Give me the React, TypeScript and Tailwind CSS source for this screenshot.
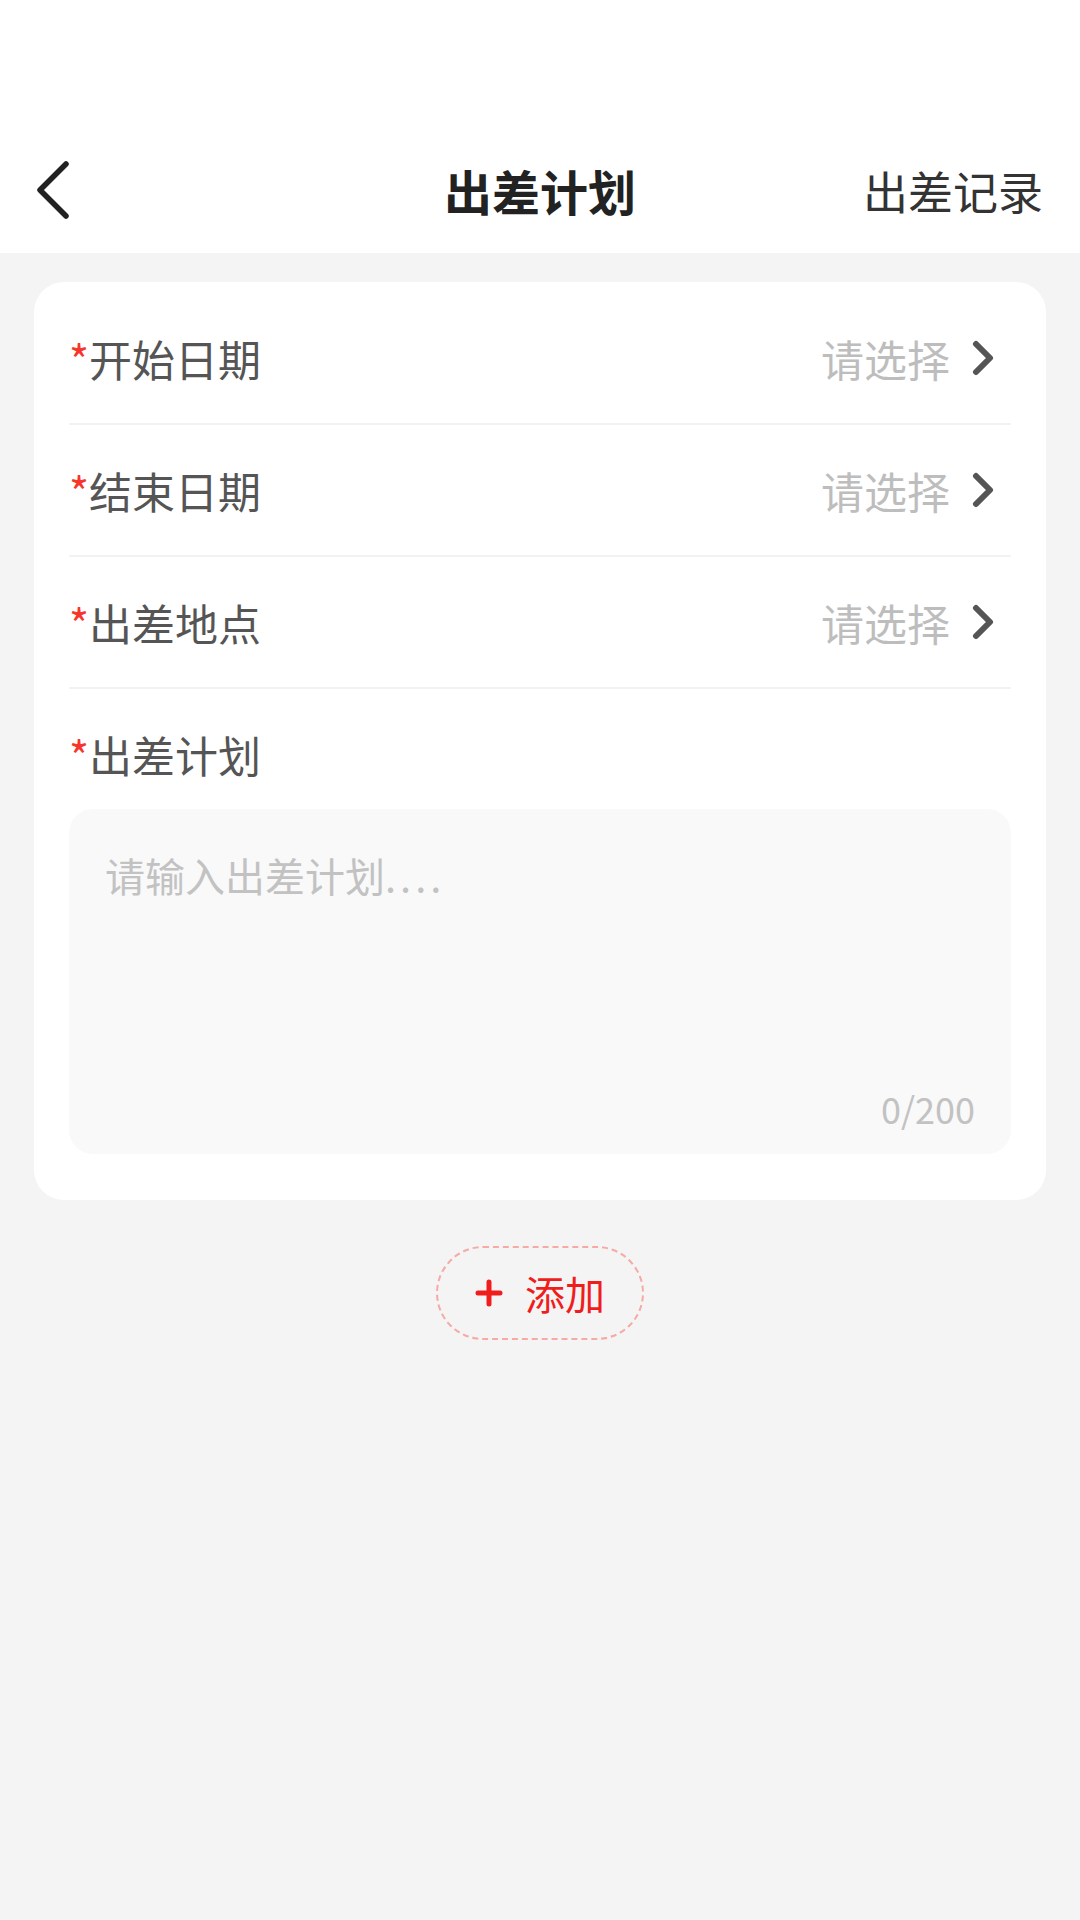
import React from "react";

const FONT = { fontFamily: '"Noto Sans CJK SC", "Noto Sans", sans-serif' };

const ChevronRight = () => (
  <svg width="22" height="36" viewBox="0 0 22 36" fill="none">
    <path d="M4 4 L18 18 L4 32" stroke="#555" strokeWidth="6" strokeLinecap="round" strokeLinejoin="round" />
  </svg>
);

const BackIcon = () => (
  <svg width="36" height="60" viewBox="0 0 36 60" fill="none">
    <path d="M32 4 L6 30 L32 56" stroke="#222" strokeWidth="5.5" strokeLinecap="round" strokeLinejoin="round" />
  </svg>
);

const Label = ({ text }: { text: string }) => (
  <div className="text-[43px] leading-[43px] text-[#555]">
    <span className="text-[#f5362b]">*</span>
    {text}
  </div>
);

const SelectRow = ({ label }: { label: string }) => (
  <div className="h-[132px] flex items-center justify-between border-b-2 border-[#f2f2f2]">
    <Label text={label} />
    <div className="flex items-center gap-[22px] pr-[17px]">
      <span className="text-[43px] leading-[43px] text-[#bdbdbd]">请选择</span>
      <ChevronRight />
    </div>
  </div>
);

export default function App() {
  return (
    <div className="w-[1080px] min-h-[1920px] bg-[#f4f4f4]" style={FONT}>
      <div className="bg-white pt-[127px]">
        <div className="h-[126px] grid grid-cols-[1fr_auto_1fr] items-center">
          <div className="pl-[34px] flex items-center">
            <BackIcon />
          </div>
          <div className="text-[48px] leading-[48px] font-bold text-[#222]">出差计划</div>
          <div className="pr-[37px] flex justify-end text-[45px] leading-[45px] text-[#333]">出差记录</div>
        </div>
      </div>

      <div className="mx-[34px] mt-[29px] rounded-[30px] bg-white px-[35px] pt-[11px] pb-[46px]">
        <SelectRow label="开始日期" />
        <SelectRow label="结束日期" />
        <SelectRow label="出差地点" />
        <div className="pt-[44px]">
          <Label text="出差计划" />
        </div>
        <div className="mt-[33px] h-[345px] rounded-[24px] bg-[#f9f9f9] px-[36px] pt-[46px] pb-[28px] flex flex-col justify-between">
          <div className="text-[40px] leading-[40px] text-[#c2c2c2]">
            请输入出差计划<span className="tracking-[4px]">....</span>
          </div>
          <div className="self-end text-[36px] leading-[36px] text-[#c2c2c2]">0/200</div>
        </div>
      </div>

      <div className="mt-[46px] flex justify-center">
        <div className="w-[208px] h-[94px] rounded-full border-2 border-dashed border-[#f6aaa4] flex items-center justify-center gap-[22px]">
          <svg width="28" height="28" viewBox="0 0 28 28" fill="none">
            <path d="M14 3 V25 M3 14 H25" stroke="#f01d1d" strokeWidth="5" strokeLinecap="round" />
          </svg>
          <span className="text-[40px] leading-[40px] text-[#f01d1d]">添加</span>
        </div>
      </div>
    </div>
  );
}
